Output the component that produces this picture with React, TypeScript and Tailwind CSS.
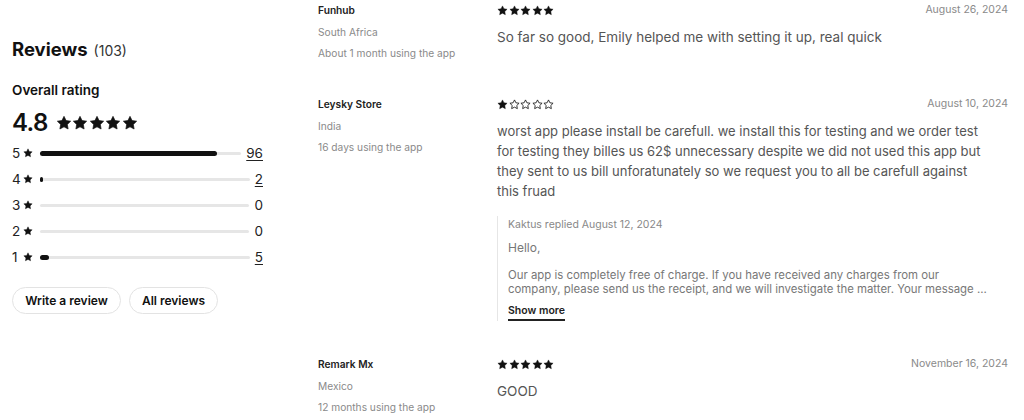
import React from 'react'

const STAR = 'M12 2l3.09 6.26L22 9.27l-5 4.87 1.18 6.88L12 17.77l-6.18 3.25L7 14.14 2 9.27l6.91-1.01L12 2z'

function Star({ size, filled = true }: { size: number; filled?: boolean }) {
  return (
    <svg width={size} height={size} viewBox="0 0 24 24" className="shrink-0">
      <path
        d={STAR}
        fill={filled ? '#111' : 'none'}
        stroke="#111"
        strokeWidth={filled ? 1 : 1.8}
        strokeLinejoin="round"
      />
    </svg>
  )
}

function Stars({ rating, size, gap }: { rating: number; size: number; gap: string }) {
  return (
    <div className={`flex items-center ${gap}`}>
      {[1, 2, 3, 4, 5].map(i => (
        <Star key={i} size={size} filled={i <= rating} />
      ))}
    </div>
  )
}

const bars = [
  { n: 5, count: 96, pct: 88 },
  { n: 4, count: 2, pct: 1.5 },
  { n: 3, count: 0, pct: 0 },
  { n: 2, count: 0, pct: 0 },
  { n: 1, count: 5, pct: 4.5 },
]

interface Review {
  name: string
  country: string
  usage: string
  rating: number
  date: string
  text: string
  size: string
  reply?: { by: string; hello: string; lines: string[] }
}

const reviews: Review[] = [
  {
    name: 'Funhub',
    country: 'South Africa',
    usage: 'About 1 month using the app',
    rating: 5,
    date: 'August 26, 2024',
    text: 'So far so good, Emily helped me with setting it up, real quick',
    size: 'text-[13.5px]',
  },
  {
    name: 'Leysky Store',
    country: 'India',
    usage: '16 days using the app',
    rating: 1,
    date: 'August 10, 2024',
    text:
      'worst app please install be carefull. we install this for testing and we order test for testing they billes us 62$ unnecessary despite we did not used this app but they sent to us bill unforatunately so we request you to all be carefull against this fruad',
    size: 'text-[13px]',
    reply: {
      by: 'Kaktus replied August 12, 2024',
      hello: 'Hello,',
      lines: [
        'Our app is completely free of charge. If you have received any charges from our',
        'company, please send us the receipt, and we will investigate the matter. Your message ...',
      ],
    },
  },
  {
    name: 'Remark Mx',
    country: 'Mexico',
    usage: '12 months using the app',
    rating: 5,
    date: 'November 16, 2024',
    text: 'GOOD',
    size: 'text-[13.5px]',
  },
]

export default function App() {
  return (
    <div className="w-[1024px] h-[420px] overflow-hidden bg-white font-['Inter',sans-serif] text-[#111] flex">
      {/* Summary */}
      <div className="w-[251px] ml-3 pt-[36px] shrink-0">
        <h2 className="leading-[26px]">
          <span className="text-[18.5px] font-bold">Reviews</span>
          <span className="text-[14px] text-[#333] ml-[6px]">(103)</span>
        </h2>
        <p className="mt-[16px] text-[13.5px] font-semibold leading-5">Overall rating</p>
        <div className="mt-[7px] flex items-center gap-[8px] h-8">
          <span className="text-[24px] font-semibold leading-8 tracking-tight">4.8</span>
          <Stars rating={5} size={16} gap="gap-[0.5px]" />
        </div>
        <div className="mt-[1px]">
          {bars.map(b => (
            <div key={b.n} className="flex items-center h-[26px] text-[13.5px] text-[#222]">
              <span className="w-[11px]">{b.n}</span>
              <Star size={10} />
              <div className="flex-1 ml-[7px] h-[3px] bg-[#e6e6e6] rounded-full flex items-center">
                {b.pct > 0 && (
                  <div
                    className="h-[5px] bg-[#111] rounded-full"
                    style={{ width: `${b.pct}%`, minWidth: '3px' }}
                  />
                )}
              </div>
              <span className={`ml-[5px] ${b.count > 0 ? 'underline underline-offset-2' : ''}`}>{b.count}</span>
            </div>
          ))}
        </div>
        <div className="mt-[17px] flex gap-2">
          <button className="h-[27px] w-[109px] rounded-full border border-[#e3e3e3] text-[12px] font-semibold">
            Write a review
          </button>
          <button className="h-[27px] w-[89px] rounded-full border border-[#e3e3e3] text-[12px] font-semibold">
            All reviews
          </button>
        </div>
      </div>

      {/* Reviews list */}
      <div className="ml-[55px] w-[690px] pt-[2px] flex flex-col gap-[35px]">
        {reviews.map(r => (
          <div key={r.name} className="flex">
            <div className="w-[179px] shrink-0 flex flex-col gap-[5.5px] text-[10.2px] leading-4">
              <span className="font-semibold text-[#222]">{r.name}</span>
              <span className="text-[#8a8a8a]">{r.country}</span>
              <span className="text-[#8a8a8a]">{r.usage}</span>
            </div>
            <div className="flex-1">
              <div className="flex items-center justify-between h-4">
                <Stars rating={r.rating} size={11} gap="gap-[0.5px]" />
                <span className="text-[10.5px] text-[#8a8a8a]">{r.date}</span>
              </div>
              <p className={`mt-[9px] ${r.size} leading-[20px] text-[#555] max-w-[490px]`}>{r.text}</p>
              {r.reply && (
                <div className="mt-[15px] border-l border-[#e6e6e6] pl-[10px] pt-[1px]">
                  <p className="text-[10.5px] leading-4 text-[#888]">{r.reply.by}</p>
                  <p className="mt-[6px] text-[12px] leading-[18px] text-[#777]">{r.reply.hello}</p>
                  <div className="mt-[11px] text-[11.4px] leading-[14px] text-[#777]">
                    {r.reply.lines.map(l => (
                      <p key={l} className="whitespace-nowrap">{l}</p>
                    ))}
                  </div>
                  <button className="mt-[5px] text-[10.5px] font-semibold text-[#222] leading-4 border-b-2 border-[#222]">
                    Show more
                  </button>
                </div>
              )}
            </div>
          </div>
        ))}
      </div>
    </div>
  )
}
